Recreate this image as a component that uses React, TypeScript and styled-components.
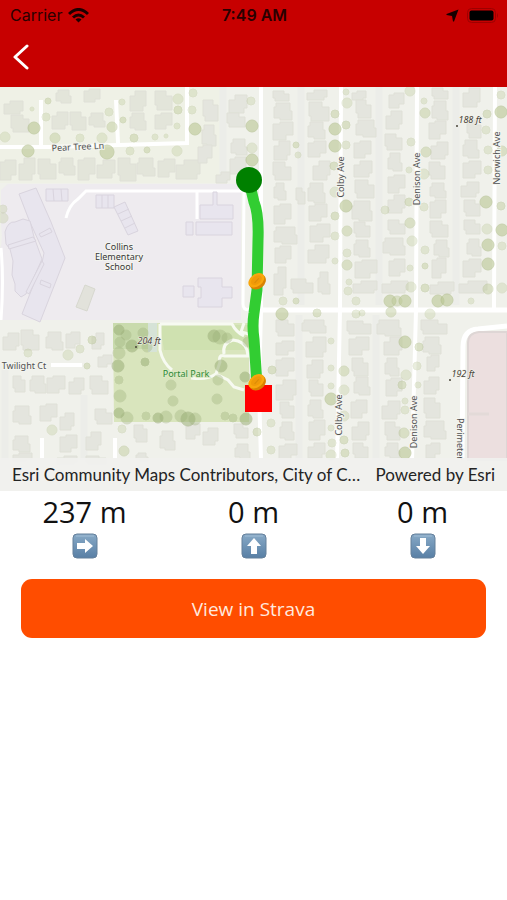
import React from "react";
import styled, { createGlobalStyle } from "styled-components";

const GlobalStyle = createGlobalStyle`
  * { box-sizing: border-box; }
  body { margin: 0; background: #fff; font-family: "Open Sans", sans-serif; }
`;

const Screen = styled.main`
  min-height: 100vh;
  display: flex;
  flex-direction: column;
  background: #fff;
`;

const Header = styled.header`
  background: #c70000;
  padding-bottom: 4px;
`;

const StatusBar = styled.div`
  display: grid;
  grid-template-columns: 1fr auto 1fr;
  align-items: center;
  height: 30px;
  padding: 0 8px 0 10px;
  font-family: Inter, sans-serif;
  font-size: 16px;
  color: #2a0000;
`;

const StatusGroup = styled.div<{ $end?: boolean }>`
  display: flex;
  align-items: center;
  gap: ${(p) => (p.$end ? 8 : 6)}px;
  justify-content: ${(p) => (p.$end ? "flex-end" : "flex-start")};
`;

const Clock = styled.time`
  font-weight: 600;
`;

const BackButton = styled.button`
  display: flex;
  align-items: center;
  height: 53px;
  padding: 0 12px;
  border: 0;
  background: none;
  color: #fff;
  cursor: pointer;
`;

const MapPanel = styled.section`
  position: relative;
  display: flex;
  overflow: hidden;
`;

const MapCanvas = styled.svg`
  display: block;
  width: 100%;
  height: auto;
  font-family: "Noto Sans", sans-serif;
`;

const Attribution = styled.footer`
  position: absolute;
  left: 0;
  right: 0;
  bottom: 0;
  display: flex;
  justify-content: space-between;
  gap: 12px;
  height: 33px;
  padding: 0 12px;
  background: rgba(240, 240, 238, 0.94);
  font-family: Lato, sans-serif;
  font-size: 17px;
  line-height: 33px;
  color: #242424;
  white-space: nowrap;
`;

const Sources = styled.span`
  overflow: hidden;
  text-overflow: ellipsis;
`;

const Stats = styled.section`
  display: grid;
  grid-template-columns: repeat(3, 1fr);
  padding: 2px 0 20px;
`;

const Stat = styled.div`
  display: flex;
  flex-direction: column;
  align-items: center;
  gap: 2px;
`;

const StatValue = styled.span`
  font-size: 29px;
  line-height: 38px;
  color: #111;
`;

const Actions = styled.div`
  display: flex;
  padding: 0 21px;
`;

const StravaButton = styled.button`
  flex: 1;
  height: 59px;
  border: 0;
  border-radius: 11px;
  background: #ff4d00;
  color: #ffe9df;
  font-family: "Open Sans", sans-serif;
  font-size: 19px;
  cursor: pointer;
`;

type Box = [number, number, number, number];
type Dot = [number, number, number];

const houses: Box[] = [
  [4,101,19,13],[11,115,18,17],[56,90,15,13],[84,89,16,13],[130,91,16,20],[155,91,17,19],
  [130,113,16,17],[155,113,17,16],[52,112,16,17],[70,112,16,18],[89,113,16,14],
  [0,160,16,20],[19,158,16,22],[38,159,18,20],[59,158,16,17],[78,158,17,22],[97,160,18,18],
  [118,158,18,23],[137,158,18,18],[158,159,17,18],[176,160,24,19],
  [203,100,15,21],[202,125,14,21],[198,145,14,18],[229,95,18,18],[227,113,18,14],
  [231,139,16,16],[230,157,16,17],[216,172,14,11],
  [273,91,16,10],[274,103,18,17],[273,122,20,18],[274,141,16,19],[273,162,18,18],
  [274,183,12,17],[274,204,17,20],[307,90,20,10],[309,102,20,19],[308,122,17,17],
  [308,141,18,16],[313,161,17,19],[296,188,9,16],[308,183,17,20],[309,204,18,17],
  [352,91,14,9],[356,100,15,18],[356,120,20,17],[354,141,17,17],[354,161,18,16],
  [355,180,19,18],[352,201,20,20],[389,93,15,15],[386,111,16,18],[385,134,17,16],
  [388,153,14,18],[388,175,17,18],[388,195,17,18],
  [432,88,16,11],[432,101,16,19],[429,121,17,18],[431,142,17,17],[429,162,16,17],
  [430,183,16,15],[430,200,16,18],[463,88,17,19],[467,120,14,18],[463,140,16,18],
  [463,161,18,17],[461,182,18,15],[464,200,16,16],
  [274,227,23,17],[275,246,16,17],[274,267,12,28],[291,279,22,14],[318,272,12,22],
  [310,224,20,18],[308,245,21,18],[354,222,16,15],[354,240,16,17],[355,260,22,18],
  [353,281,24,12],[388,220,17,14],[383,238,22,17],[389,259,16,17],[382,281,26,12],
  [430,221,18,16],[434,240,15,17],[432,258,14,20],[430,282,24,12],[464,220,16,14],
  [467,239,14,17],[463,259,18,18],[459,281,28,12],
  [276,320,18,16],[302,320,24,13],[276,341,18,14],[306,337,20,20],[347,321,24,13],
  [377,320,24,16],[349,337,20,18],[384,337,18,18],[421,320,26,14],[423,337,18,17],
  [276,358,18,18],[276,380,20,20],[280,402,14,16],[280,422,14,18],[279,444,18,15],
  [307,360,16,18],[309,380,14,16],[308,400,15,18],[309,420,16,20],[308,443,17,15],
  [352,358,16,18],[354,377,16,18],[351,400,16,18],[352,422,17,18],[353,443,15,15],
  [385,358,14,18],[386,378,16,18],[382,401,18,18],[385,422,15,18],[385,443,15,15],
  [427,355,12,16],[424,377,15,17],[424,398,16,20],[424,421,22,18],[426,443,14,15],
  [3,333,16,17],[21,330,18,20],[46,332,17,18],[66,332,14,16],[92,333,12,16],
  [13,376,12,16],[30,376,16,17],[47,376,18,17],[69,378,15,16],[90,376,18,18],
  [13,406,18,18],[40,404,17,17],[60,413,14,17],[95,409,17,15],[13,436,17,16],
  [60,435,17,17],[86,432,15,18],[134,425,13,17],[160,431,15,19],[186,424,14,15],
  [203,428,15,17],[234,424,14,14],[235,444,15,15],[98,355,14,12],
  [57,456,20,8],[86,456,20,8],[136,453,12,8],[13,453,19,8]
];

const trees: Dot[] = [
  [34,128,6],[28,151,6],[5,137,5],[48,101,3],[46,117,4],[32,109,2],[55,138,5],[80,138,4],
  [102,138,5],[112,127,5],[109,112,4],[122,102,3],[123,120,3],[107,152,7],[130,151,4],
  [134,138,4],[155,137,3],[166,136,2],[147,150,3],[177,151,5],[178,99,5],[178,110,4],
  [193,93,4],[192,110,4],[195,129,6],[177,126,3],[251,101,4],[252,126,6],[252,148,5],
  [252,160,6],[335,114,4],[335,129,6],[335,146,6],[346,125,4],[347,103,5],[346,145,4],
  [334,166,4],[335,192,5],[346,206,6],[335,216,4],[346,92,3],[410,91,5],[425,113,5],
  [424,101,3],[411,142,4],[426,152,5],[424,174,5],[409,170,3],[409,202,4],[424,207,4],
  [501,112,6],[487,114,4],[486,130,4],[488,150,4],[502,151,5],[488,170,4],[486,202,6],
  [501,206,4],[501,95,4],[385,210,4],[296,145,3],[298,155,3],[335,236,4],[347,231,5],
  [335,261,3],[347,253,4],[347,265,5],[349,282,3],[348,291,4],[410,223,5],[412,241,5],
  [425,250,4],[425,266,3],[410,268,3],[411,287,5],[425,288,4],[487,229,5],[488,245,6],
  [488,264,6],[502,230,6],[502,246,4],[488,289,5],[502,288,5],[283,301,4],[296,301,3],
  [356,301,4],[390,301,6],[397,301,5],[405,301,6],[438,301,6],[447,300,6],[471,301,3],
  [282,314,6],[317,313,4],[356,314,4],[362,313,3],[391,312,5],[430,314,5],[405,342,6],
  [419,347,4],[331,341,3],[331,368,3],[344,371,5],[331,386,3],[344,390,5],[331,399,6],
  [344,416,5],[331,428,3],[344,440,4],[332,443,4],[331,455,5],[345,453,4],[417,366,4],
  [406,375,5],[402,385,4],[405,401,3],[405,410,4],[404,433,5],[405,453,6],[418,385,3],
  [272,370,4],[271,423,4],[271,450,4],[257,432,4],[28,353,4],[68,355,5],[87,366,3],
  [52,430,5],[122,429,4],[124,451,5],[3,209,4],[3,218,5],[92,340,4],[80,349,4]
];

const parkTrees: Dot[] = [
  [119,330,5],[120,342,5],[119,353,6],[118,366,6],[119,380,4],[120,396,6],[119,413,5],
  [127,418,6],[146,416,4],[158,418,5],[166,417,6],[181,416,6],[188,419,7],[195,419,6],
  [126,335,5],[132,346,6],[143,333,5],[147,347,5],[145,362,4],[171,385,5],[173,401,5],
  [214,336,6],[220,337,7],[227,338,5],[221,366,6],[218,380,5],[217,399,5],[245,377,5],
  [225,416,4],[233,418,4],[246,419,6],[248,342,5]
];

function houseOutline([x, y, w, h]: Box, kind: number) {
  const a = Math.round(w / 3);
  const b = Math.round(h / 4);
  switch (kind) {
    case 0:
      return `M${x + a} ${y}H${x + w}V${y + h - b}H${x + w - 3}V${y + h}H${x}V${y + b}H${x + a}Z`;
    case 1:
      return `M${x} ${y}H${x + w - a}V${y + b}H${x + w}V${y + h}H${x + 2}V${y + h - b}H${x}Z`;
    case 2:
      return `M${x + 2} ${y}H${x + w - 2}V${y + 2 * b}H${x + w}V${y + h}H${x + a}V${y + h - 2}H${x}V${y + b}H${x + 2}Z`;
    default:
      return `M${x} ${y + 2}H${x + a}V${y}H${x + w}V${y + h - b}H${x + w - a}V${y + h}H${x}Z`;
  }
}

const labels = [
  { text: "Pear Tree Ln", x: 78, y: 150, rotate: -3 },
  { text: "Twilight Ct", x: 24, y: 369, rotate: 0 },
  { text: "Colby Ave", x: 344, y: 177, rotate: -90 },
  { text: "Denison Ave", x: 420, y: 179, rotate: -90 },
  { text: "Norwich Ave", x: 500, y: 158, rotate: -90 },
  { text: "Colby Ave", x: 342, y: 415, rotate: -90 },
  { text: "Denison Ave", x: 417, y: 422, rotate: -90 },
  { text: "Perimeter", x: 457, y: 439, rotate: 90 }
];

const elevations = [
  { text: "188 ft", x: 470, y: 123, dotX: 457, dotY: 126 },
  { text: "204 ft", x: 149, y: 344, dotX: 136, dotY: 347 },
  { text: "192 ft", x: 463, y: 377, dotX: 450, dotY: 380 }
];

function Marker({ x, y }: { x: number; y: number }) {
  return (
    <g transform={`translate(${x} ${y}) rotate(-38)`}>
      <ellipse cx="0" cy="1" rx="9" ry="7" fill="#d98200" />
      <ellipse cx="0" cy="-1" rx="9" ry="6" fill="#f9a60c" />
      <ellipse cx="0" cy="-1" rx="6" ry="4" fill="#f09a08" />
      <path d="M-3 0L3 -1" fill="none" stroke="#d98c08" />
    </g>
  );
}

function RouteMap() {
  return (
    <MapCanvas viewBox="0 87 507 404" role="img" aria-label="Activity route map">
      <rect y="87" width="507" height="404" fill="#f0f1eb" />
      <path d="M0 87H220V183H0Z" fill="#eff1e6" />
      <g fill="none" stroke="#ecede9" strokeWidth="7">
        <path d="M301 87V305M379 87V305M456 87V305M223 87V182M299 315V460M376 315V460M5 370V460M84 395V460" />
      </g>
      <path d="M8 184H241V320H0V250Q3 240 1 225V190Z" fill="#eeebef" />
      <path d="M113 323H249V422H114Z" fill="#d9e5bd" />
      <path d="M113 323H157V349H113Z" fill="#c9dbad" />
      <path d="M148 323H157V352H148Z" fill="#d6e3d7" />
      <path d="M160 325H249V350H164Z" fill="#cfe1b0" />

      <g fill="none" stroke="#fff" strokeWidth="4">
        <path d="M0 147H50L187 143V87M41 100V146M116 100L118 143" />
        <path d="M261 87V310L259 390L261 460M341 87L340 310L337 460M417 87L416 310L412 460M495 87L494 310" />
        <path d="M248 310H507" strokeWidth="5" />
        <path d="M66 218Q69 205 78 199L86 191H244L243 304Q243 310 249 310M197 191V219" strokeWidth="3" />
        <path d="M1 248Q4 280 1 320" strokeWidth="3" />
        <path d="M51 365H82M42 438V459M115 438V459" />
        <path d="M462 460L463 347Q463 330 478 329L507 326" strokeWidth="5" />
      </g>
      <path d="M468 460V343Q468 333 479 332H507V460Z" fill="#ecdfdf" stroke="#ded6d5" strokeWidth="2" />
      <path d="M468 414H489" stroke="#e3dad8" strokeWidth="3" />

      <g fill="none" stroke="#f7faf1" strokeWidth="3">
        <path d="M160 324V350Q163 363 172 370M160 324H232Q236 332 244 336M244 323L241 332L249 334" />
        <path d="M224 354Q222 343 233 340Q244 341 247 350L248 356H225Q218 354 220 362L216 374L228 380L234 387L244 390" />
        <path d="M191 378Q208 380 216 374" />
      </g>

      <g stroke="#dfe0d7">
        {houses.map((box, i) => (
          <path key={i} d={houseOutline(box, i % 4)} fill={i < 21 ? "#e3e5da" : "#e4e5de"} />
        ))}
      </g>

      <g fill="#e8e5ee" stroke="#d9d4de">
        <path d="M19 194L36 188L51 222L65 258L40 322L22 314L42 263L44 253L29 220Z" />
        <path d="M5 232Q8 221 15 222L23 219L30 221L34 237L42 259L34 277L26 294L21 297L15 291V284L12 275L13 261L10 249L6 244Z" />
        <path d="M8 245L33 237L36 241L9 249ZM39 234L50 228L52 232L41 237ZM41 280L51 284L50 288L40 284ZM26 292L42 261L44 264L29 294Z" />
        <path d="M46 189H68V201H46ZM53 189L54 201M61 189L62 201M96 195H114V208H96ZM102 195V208M108 195V208" />
        <path d="M114 207L125 202L138 231L128 235ZM118 214L129 209M121 221L132 216M125 228L135 223" />
        <path d="M200 205H213V192H217V205H233V219H200ZM196 222H232V235H196ZM186 222H193V235H186Z" />
        <path d="M198 278H222V287H232V298H222V307H198V298H201V287H198ZM183 286H194V297H183Z" />
      </g>
      <path d="M85 285L95 289L87 311L76 307Z" fill="#e2e2db" stroke="#d7d8cf" />

      <g fill="#bac793" stroke="#adbb85">
        {trees.map(([cx, cy, r], i) => (
          <circle key={i} cx={cx} cy={cy} r={r} opacity={r > 5 ? 0.6 : i % 3 ? 0.3 : 0.42} />
        ))}
      </g>
      <g fill="#9bb077" stroke="#9bad79">
        {parkTrees.map(([cx, cy, r], i) => (
          <circle key={i} cx={cx} cy={cy} r={r} opacity={i % 3 ? 0.35 : 0.55} />
        ))}
      </g>

      <g fontSize="9" fill="#505050" stroke="#f4f5f0" strokeWidth="2" paintOrder="stroke" textAnchor="middle">
        {labels.map(({ text, x, y, rotate }, i) => (
          <text key={i} x={x} y={y} transform={`rotate(${rotate} ${x} ${y})`}>{text}</text>
        ))}
        <text x="119" y="250" fill="#383838">Collins</text>
        <text x="119" y="260" fill="#383838">Elementary</text>
        <text x="119" y="270" fill="#383838">School</text>
        <text x="186" y="377" fill="#2c8836" stroke="#dce9c4">Portal Park</text>
      </g>
      <g fontSize="9" fontStyle="italic" fill="#4a4438" stroke="#f0f1ea" strokeWidth="1" paintOrder="stroke" textAnchor="middle">
        {elevations.map(({ text, x, y, dotX, dotY }) => (
          <g key={text}>
            <text x={x} y={y}>{text}</text>
            <circle cx={dotX} cy={dotY} r="1" stroke="none" />
          </g>
        ))}
      </g>

      <path d="M249 181L254 202Q259 214 258 240L257 290L254 313Q252 326 254 339L257 385" fill="none" stroke="#32cd32" strokeWidth="11" strokeLinejoin="round" />
      <circle cx="249" cy="180" r="13" fill="#008000" />
      <path d="M245 385H272V412H245Z" fill="#f00" />
      <Marker x={257} y={281} />
      <Marker x={257} y={382} />
    </MapCanvas>
  );
}

function ArrowTile({ angle, label }: { angle: number; label: string }) {
  return (
    <svg width="26" height="26" viewBox="0 0 26 26" role="img" aria-label={label}>
      <defs>
        <linearGradient id={`tile${angle}`} x1="0" y1="0" x2="0" y2="1">
          <stop offset="0" stopColor="#87a9c6" />
          <stop offset="1" stopColor="#587fa5" />
        </linearGradient>
      </defs>
      <rect x="1" y="1" width="24" height="24" rx="4" fill={`url(#tile${angle})`} stroke="#65809b" />
      <path d="M4 3H22" stroke="#a0bdd5" />
      <path d="M5 10H13V6L21 13L13 20V16H5Z" fill="#fff" transform={`rotate(${angle} 13 13)`} />
    </svg>
  );
}

const stats = [
  { value: "237 m", angle: 0, label: "Distance" },
  { value: "0 m", angle: -90, label: "Ascent" },
  { value: "0 m", angle: 90, label: "Descent" }
];

export default function App() {
  return (
    <Screen>
      <GlobalStyle />
      <Header>
        <StatusBar>
          <StatusGroup>
            <span>Carrier</span>
            <svg width="21" height="15" viewBox="0 0 21 15" fill="none" stroke="#1c0000" strokeWidth="3" aria-label="Wi-Fi">
              <path d="M1 6Q10.5 -3 20 6M5 9.5Q10.5 4.5 16 9.5" />
              <path d="M7.5 11.5Q10.5 9 13.5 11.5L10.5 14.5Z" fill="#1c0000" stroke="none" />
            </svg>
          </StatusGroup>
          <Clock>7:49 AM</Clock>
          <StatusGroup $end>
            <svg width="13" height="13" viewBox="0 0 13 13" aria-label="Location">
              <path d="M12.5 0.5L8 12.5H7L6 7L0.5 6V5Z" fill="#160000" />
            </svg>
            <svg width="32" height="15" viewBox="0 0 32 15" aria-label="Battery">
              <rect x="0.5" y="0.5" width="28" height="14" rx="4" fill="none" stroke="#9d0000" />
              <rect x="2.5" y="2.5" width="24" height="10" rx="2" fill="#000" />
              <path d="M30 5Q32 7.5 30 10Z" fill="#9d0000" />
            </svg>
          </StatusGroup>
        </StatusBar>
        <BackButton type="button" aria-label="Back">
          <svg width="18" height="26" viewBox="0 0 18 26" fill="none" stroke="currentColor" strokeWidth="3" strokeLinecap="round" strokeLinejoin="round">
            <path d="M15 2L3 13L15 24" />
          </svg>
        </BackButton>
      </Header>
      <MapPanel>
        <RouteMap />
        <Attribution>
          <Sources>Esri Community Maps Contributors, City of C…</Sources>
          <span>Powered by Esri</span>
        </Attribution>
      </MapPanel>
      <Stats>
        {stats.map(({ value, angle, label }) => (
          <Stat key={label}>
            <StatValue>{value}</StatValue>
            <ArrowTile angle={angle} label={label} />
          </Stat>
        ))}
      </Stats>
      <Actions>
        <StravaButton type="button">View in Strava</StravaButton>
      </Actions>
    </Screen>
  );
}
